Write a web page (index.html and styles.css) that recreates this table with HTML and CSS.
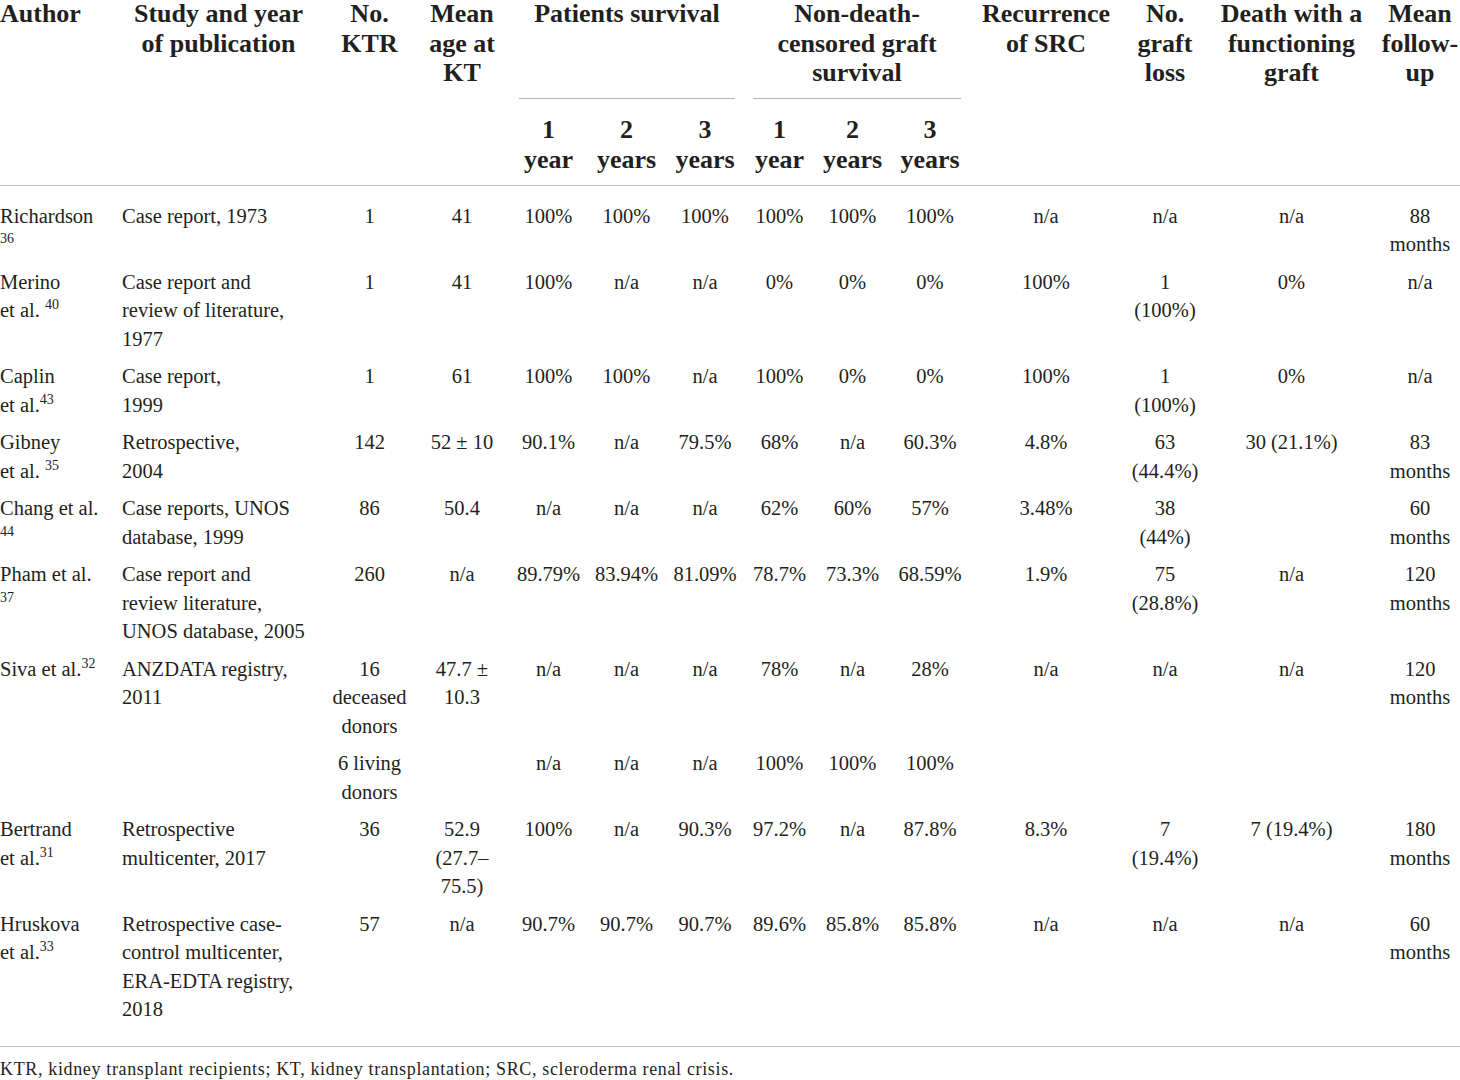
FILE: index.html
```html
<!DOCTYPE html>
<html lang="en">
<head>
<meta charset="utf-8">
<title>Kidney transplantation outcomes in scleroderma</title>
<link rel="stylesheet" href="styles.css">
</head>
<body>
<table class="data">
  <colgroup>
    <col class="w-author">
    <col class="w-study">
    <col class="w-ktr">
    <col class="w-age">
    <col class="w-p1">
    <col class="w-p2">
    <col class="w-p3">
    <col class="w-g1">
    <col class="w-g2">
    <col class="w-g3">
    <col class="w-rec">
    <col class="w-loss">
    <col class="w-death">
    <col class="w-fu">
  </colgroup>
  <thead>
    <tr class="head-top">
      <th rowspan="2" class="left hb">Author</th>
      <th rowspan="2" class="hb">Study and year<br>of publication</th>
      <th rowspan="2" class="hb">No.<br>KTR</th>
      <th rowspan="2" class="hb">Mean<br>age at<br>KT</th>
      <th colspan="3" class="group">Patients survival</th>
      <th colspan="3" class="group">Non-death-<br>censored graft<br>survival</th>
      <th rowspan="2" class="hb">Recurrence<br>of SRC</th>
      <th rowspan="2" class="hb">No.<br>graft<br>loss</th>
      <th rowspan="2" class="hb">Death with a<br>functioning<br>graft</th>
      <th rowspan="2" class="hb">Mean<br>follow-<br>up</th>
    </tr>
    <tr class="head-sub">
      <th class="hb">1<br>year</th>
      <th class="hb">2<br>years</th>
      <th class="hb">3<br>years</th>
      <th class="hb">1<br>year</th>
      <th class="hb">2<br>years</th>
      <th class="hb">3<br>years</th>
    </tr>
  </thead>
  <tbody>
    <tr class="first">
      <td class="left">Richardson<br><sup>36</sup></td>
      <td class="left">Case report, 1973</td>
      <td>1</td><td>41</td>
      <td>100%</td><td>100%</td><td>100%</td>
      <td>100%</td><td>100%</td><td>100%</td>
      <td>n/a</td><td>n/a</td><td>n/a</td><td>88<br>months</td>
    </tr>
    <tr>
      <td class="left">Merino<br>et al. <sup>40</sup></td>
      <td class="left">Case report and<br>review of literature,<br>1977</td>
      <td>1</td><td>41</td>
      <td>100%</td><td>n/a</td><td>n/a</td>
      <td>0%</td><td>0%</td><td>0%</td>
      <td>100%</td><td>1<br>(100%)</td><td>0%</td><td>n/a</td>
    </tr>
    <tr>
      <td class="left">Caplin<br>et al.<sup>43</sup></td>
      <td class="left">Case report,<br>1999</td>
      <td>1</td><td>61</td>
      <td>100%</td><td>100%</td><td>n/a</td>
      <td>100%</td><td>0%</td><td>0%</td>
      <td>100%</td><td>1<br>(100%)</td><td>0%</td><td>n/a</td>
    </tr>
    <tr>
      <td class="left">Gibney<br>et al. <sup>35</sup></td>
      <td class="left">Retrospective,<br>2004</td>
      <td>142</td><td>52 ± 10</td>
      <td>90.1%</td><td>n/a</td><td>79.5%</td>
      <td>68%</td><td>n/a</td><td>60.3%</td>
      <td>4.8%</td><td>63<br>(44.4%)</td><td>30 (21.1%)</td><td>83<br>months</td>
    </tr>
    <tr>
      <td class="left">Chang et al.<br><sup>44</sup></td>
      <td class="left">Case reports, UNOS<br>database, 1999</td>
      <td>86</td><td>50.4</td>
      <td>n/a</td><td>n/a</td><td>n/a</td>
      <td>62%</td><td>60%</td><td>57%</td>
      <td>3.48%</td><td>38<br>(44%)</td><td></td><td>60<br>months</td>
    </tr>
    <tr>
      <td class="left">Pham et al.<br><sup>37</sup></td>
      <td class="left">Case report and<br>review literature,<br>UNOS database, 2005</td>
      <td>260</td><td>n/a</td>
      <td>89.79%</td><td>83.94%</td><td>81.09%</td>
      <td>78.7%</td><td>73.3%</td><td>68.59%</td>
      <td>1.9%</td><td>75<br>(28.8%)</td><td>n/a</td><td>120<br>months</td>
    </tr>
    <tr>
      <td class="left" rowspan="2">Siva et al.<sup>32</sup></td>
      <td class="left" rowspan="2">ANZDATA registry,<br>2011</td>
      <td>16<br>deceased<br>donors</td><td>47.7 ±<br>10.3</td>
      <td>n/a</td><td>n/a</td><td>n/a</td>
      <td>78%</td><td>n/a</td><td>28%</td>
      <td>n/a</td><td>n/a</td><td>n/a</td><td>120<br>months</td>
    </tr>
    <tr>
      <td>6 living<br>donors</td><td></td>
      <td>n/a</td><td>n/a</td><td>n/a</td>
      <td>100%</td><td>100%</td><td>100%</td>
      <td></td><td></td><td></td><td></td>
    </tr>
    <tr>
      <td class="left">Bertrand<br>et al.<sup>31</sup></td>
      <td class="left">Retrospective<br>multicenter, 2017</td>
      <td>36</td><td>52.9<br>(27.7–<br>75.5)</td>
      <td>100%</td><td>n/a</td><td>90.3%</td>
      <td>97.2%</td><td>n/a</td><td>87.8%</td>
      <td>8.3%</td><td>7<br>(19.4%)</td><td>7 (19.4%)</td><td>180<br>months</td>
    </tr>
    <tr class="last">
      <td class="left">Hruskova<br>et al.<sup>33</sup></td>
      <td class="left">Retrospective case-<br>control multicenter,<br>ERA-EDTA registry,<br>2018</td>
      <td>57</td><td>n/a</td>
      <td>90.7%</td><td>90.7%</td><td>90.7%</td>
      <td>89.6%</td><td>85.8%</td><td>85.8%</td>
      <td>n/a</td><td>n/a</td><td>n/a</td><td>60<br>months</td>
    </tr>
  </tbody>
</table>
<p class="footnote">KTR, kidney transplant recipients; KT, kidney transplantation; SRC, scleroderma renal crisis.</p>
</body>
</html>
```
FILE: styles.css
```css
html, body {
  margin: 0;
  padding: 0;
  background: #ffffff;
  overflow: hidden;
}

body {
  color: #231f20;
  font-family: "Liberation Serif", "Times New Roman", serif;
}

.data {
  border-collapse: collapse;
  table-layout: fixed;
  width: 1465px;
  margin-top: -1px;
}

.w-author { width: 112px; }
.w-study { width: 213px; }
.w-ktr { width: 89px; }
.w-age { width: 96px; }
.w-p1 { width: 77px; }
.w-p2 { width: 79px; }
.w-p3 { width: 78px; }
.w-g1 { width: 71px; }
.w-g2 { width: 75px; }
.w-g3 { width: 80px; }
.w-rec { width: 152px; }
.w-loss { width: 86px; }
.w-death { width: 167px; }
.w-fu { width: 90px; }

.data th {
  font-size: 26px;
  line-height: 29.5px;
  font-weight: bold;
  text-align: center;
  vertical-align: top;
  white-space: nowrap;
  padding: 0 6px;
}

.data th.left,
.data td.left {
  text-align: left;
}

.data th.left {
  padding-left: 0;
}

.data th.group {
  padding: 0 8px 11.5px;
  background-image: linear-gradient(#b4b4b4, #b4b4b4);
  background-repeat: no-repeat;
  background-position: center bottom;
  background-size: calc(100% - 18px) 1px;
}

.head-sub th {
  padding-top: 16px;
  padding-bottom: 11px;
}

.data th.hb {
  border-bottom: 1px solid #c4c4c4;
}

.data td {
  font-size: 20.5px;
  line-height: 28.5px;
  text-align: center;
  vertical-align: top;
  white-space: nowrap;
  padding: 4.5px 6px;
}

.data td.left {
  padding-left: 10px;
}

.data td:first-child.left {
  padding-left: 0;
}

.data tr.first td {
  padding-top: 15.5px;
}

.data tr.last td {
  padding-bottom: 22px;
  border-bottom: 1px solid #c4c4c4;
}

.data sup {
  font-size: 14px;
  line-height: 0;
  vertical-align: 8px;
}

.footnote {
  margin: 10px 0 0;
  font-size: 18px;
  letter-spacing: 0.65px;
  line-height: 24px;
}
```
